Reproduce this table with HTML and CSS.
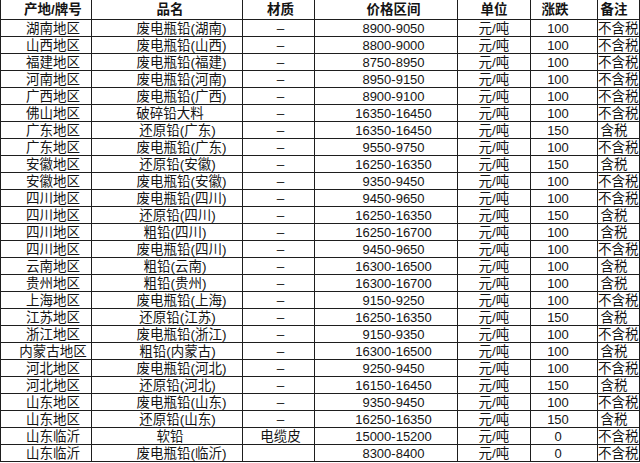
FILE: index.html
```html
<!DOCTYPE html>
<html lang="zh-CN">
<head>
<meta charset="utf-8">
<title>铅价格表</title>
<link rel="stylesheet" href="styles.css">
</head>
<body>
<div class="sheet">
  <div class="cell c1 head">产地/牌号</div><div class="cell c2 head">品名</div><div class="cell c3 head">材质</div><div class="cell c4 head">价格区间</div><div class="cell c5 head">单位</div><div class="cell c6 head">涨跌</div><div class="cell c7 head">备注</div>

  <div class="cell c1">湖南地区</div><div class="cell c2 fei">废电瓶铅(湖南)</div><div class="cell c3">–</div><div class="cell c4">8900-9050</div><div class="cell c5">元/吨</div><div class="cell c6">100</div><div class="cell c7">不含税</div>
  <div class="cell c1">山西地区</div><div class="cell c2 fei">废电瓶铅(山西)</div><div class="cell c3">–</div><div class="cell c4">8800-9000</div><div class="cell c5">元/吨</div><div class="cell c6">100</div><div class="cell c7">不含税</div>
  <div class="cell c1">福建地区</div><div class="cell c2 fei">废电瓶铅(福建)</div><div class="cell c3">–</div><div class="cell c4">8750-8950</div><div class="cell c5">元/吨</div><div class="cell c6">100</div><div class="cell c7">不含税</div>
  <div class="cell c1">河南地区</div><div class="cell c2 fei">废电瓶铅(河南)</div><div class="cell c3">–</div><div class="cell c4">8950-9150</div><div class="cell c5">元/吨</div><div class="cell c6">100</div><div class="cell c7">不含税</div>
  <div class="cell c1">广西地区</div><div class="cell c2 fei">废电瓶铅(广西)</div><div class="cell c3">–</div><div class="cell c4">8900-9100</div><div class="cell c5">元/吨</div><div class="cell c6">100</div><div class="cell c7">不含税</div>
  <div class="cell c1">佛山地区</div><div class="cell c2">破碎铅大料</div><div class="cell c3">–</div><div class="cell c4">16350-16450</div><div class="cell c5">元/吨</div><div class="cell c6">100</div><div class="cell c7">不含税</div>
  <div class="cell c1">广东地区</div><div class="cell c2 huan">还原铅(广东)</div><div class="cell c3">–</div><div class="cell c4">16350-16450</div><div class="cell c5">元/吨</div><div class="cell c6">150</div><div class="cell c7">含税</div>
  <div class="cell c1">广东地区</div><div class="cell c2 fei">废电瓶铅(广东)</div><div class="cell c3">–</div><div class="cell c4">9550-9750</div><div class="cell c5">元/吨</div><div class="cell c6">100</div><div class="cell c7">不含税</div>
  <div class="cell c1">安徽地区</div><div class="cell c2 huan">还原铅(安徽)</div><div class="cell c3">–</div><div class="cell c4">16250-16350</div><div class="cell c5">元/吨</div><div class="cell c6">150</div><div class="cell c7">含税</div>
  <div class="cell c1">安徽地区</div><div class="cell c2 fei">废电瓶铅(安徽)</div><div class="cell c3">–</div><div class="cell c4">9350-9450</div><div class="cell c5">元/吨</div><div class="cell c6">100</div><div class="cell c7">不含税</div>
  <div class="cell c1">四川地区</div><div class="cell c2 fei">废电瓶铅(四川)</div><div class="cell c3">–</div><div class="cell c4">9450-9650</div><div class="cell c5">元/吨</div><div class="cell c6">100</div><div class="cell c7">不含税</div>
  <div class="cell c1">四川地区</div><div class="cell c2 huan">还原铅(四川)</div><div class="cell c3">–</div><div class="cell c4">16250-16350</div><div class="cell c5">元/吨</div><div class="cell c6">150</div><div class="cell c7">含税</div>
  <div class="cell c1">四川地区</div><div class="cell c2 cu">粗铅(四川)</div><div class="cell c3">–</div><div class="cell c4">16250-16700</div><div class="cell c5">元/吨</div><div class="cell c6">100</div><div class="cell c7">含税</div>
  <div class="cell c1">四川地区</div><div class="cell c2 fei">废电瓶铅(四川)</div><div class="cell c3">–</div><div class="cell c4">9450-9650</div><div class="cell c5">元/吨</div><div class="cell c6">100</div><div class="cell c7">不含税</div>
  <div class="cell c1">云南地区</div><div class="cell c2 cu">粗铅(云南)</div><div class="cell c3">–</div><div class="cell c4">16300-16500</div><div class="cell c5">元/吨</div><div class="cell c6">100</div><div class="cell c7">含税</div>
  <div class="cell c1">贵州地区</div><div class="cell c2 cu">粗铅(贵州)</div><div class="cell c3">–</div><div class="cell c4">16300-16700</div><div class="cell c5">元/吨</div><div class="cell c6">100</div><div class="cell c7">含税</div>
  <div class="cell c1">上海地区</div><div class="cell c2 fei">废电瓶铅(上海)</div><div class="cell c3">–</div><div class="cell c4">9150-9250</div><div class="cell c5">元/吨</div><div class="cell c6">100</div><div class="cell c7">不含税</div>
  <div class="cell c1">江苏地区</div><div class="cell c2 huan">还原铅(江苏)</div><div class="cell c3">–</div><div class="cell c4">16250-16350</div><div class="cell c5">元/吨</div><div class="cell c6">150</div><div class="cell c7">含税</div>
  <div class="cell c1">浙江地区</div><div class="cell c2 fei">废电瓶铅(浙江)</div><div class="cell c3">–</div><div class="cell c4">9150-9350</div><div class="cell c5">元/吨</div><div class="cell c6">100</div><div class="cell c7">不含税</div>
  <div class="cell c1">内蒙古地区</div><div class="cell c2 huan">粗铅(内蒙古)</div><div class="cell c3">–</div><div class="cell c4">16300-16500</div><div class="cell c5">元/吨</div><div class="cell c6">100</div><div class="cell c7">含税</div>
  <div class="cell c1">河北地区</div><div class="cell c2 fei">废电瓶铅(河北)</div><div class="cell c3">–</div><div class="cell c4">9250-9450</div><div class="cell c5">元/吨</div><div class="cell c6">100</div><div class="cell c7">不含税</div>
  <div class="cell c1">河北地区</div><div class="cell c2 huan">还原铅(河北)</div><div class="cell c3">–</div><div class="cell c4">16150-16450</div><div class="cell c5">元/吨</div><div class="cell c6">150</div><div class="cell c7">含税</div>
  <div class="cell c1">山东地区</div><div class="cell c2 fei">废电瓶铅(山东)</div><div class="cell c3">–</div><div class="cell c4">9350-9450</div><div class="cell c5">元/吨</div><div class="cell c6">100</div><div class="cell c7">不含税</div>
  <div class="cell c1">山东地区</div><div class="cell c2 huan">还原铅(山东)</div><div class="cell c3">–</div><div class="cell c4">16250-16350</div><div class="cell c5">元/吨</div><div class="cell c6">150</div><div class="cell c7">含税</div>
  <div class="cell c1">山东临沂</div><div class="cell c2">软铅</div><div class="cell c3">电缆皮</div><div class="cell c4">15000-15200</div><div class="cell c5">元/吨</div><div class="cell c6">0</div><div class="cell c7">不含税</div>
  <div class="cell c1">山东临沂</div><div class="cell c2 fei">废电瓶铅(临沂)</div><div class="cell c3"></div><div class="cell c4">8300-8400</div><div class="cell c5">元/吨</div><div class="cell c6">0</div><div class="cell c7">不含税</div>
</div>
</body>
</html>
```
FILE: styles.css
```css
html, body {
  margin: 0;
  padding: 0;
  background: #ffffff;
}

.sheet {
  display: grid;
  grid-template-columns: 91px 151px 72px 143px 73px 67px 42px;
  grid-template-rows: 20px repeat(26, 17px);
  width: 640px;
  box-sizing: border-box;
  border-left: 1px solid #1e1e1e;
  font-family: "Liberation Sans", "Noto Sans CJK SC", sans-serif;
  font-size: 13.5px;
  color: #141414;
}

.cell {
  box-sizing: border-box;
  border-right: 1px solid #1e1e1e;
  border-bottom: 1px solid #1e1e1e;
  line-height: 17px;
  text-align: center;
  white-space: nowrap;
  overflow: visible;
}

.head {
  font-weight: bold;
  line-height: 19px;
}

.c1 { padding-left: 14px; }
.c2 { padding-left: 6px; }
.c2.cu { padding-left: 16px; }
.c2.huan { padding-left: 21px; }
.c2.fei { padding-left: 29px; }
.c3 { padding-left: 4px; }
.c4 { padding-left: 15px; font-size: 13px; }
.c4.head { font-size: 13.5px; }
.c5 { padding-left: 0; }
.c6 { padding-right: 12px; font-size: 13px; }
.c6.head { font-size: 13.5px; padding-right: 18px; }
.c7 { padding-right: 9px; }
```
